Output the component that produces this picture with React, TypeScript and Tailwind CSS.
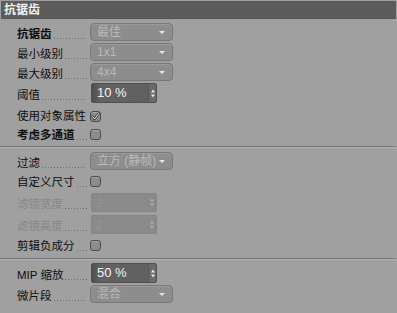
import React from "react";

const font = "font-['Liberation_Sans','Noto_Sans_CJK_SC',sans-serif]";

function Label({ text, bold, disabled, low }: { text: string; bold?: boolean; disabled?: boolean; low?: boolean }) {
  return (
    <div className={`flex items-end w-[89px] pl-[17px] pr-[2px] shrink-0 ${low ? "pt-[3px]" : ""}`}>
      <span
        className={`whitespace-nowrap text-[11.5px] leading-[16px] ${bold ? "font-bold" : ""} ${
          disabled ? "text-[#888888]" : "text-[#0f0f0f]"
        }`}
      >
        {text}
      </span>
      <span className="flex-1 h-px mb-[3px] ml-[2px] bg-[linear-gradient(to_right,#707070_1px,transparent_1px)] bg-[length:3px_1px]" />
    </div>
  );
}

function Dropdown({ value }: { value: string }) {
  return (
    <div className="relative w-[83px] h-[18px] ml-[1px] rounded-[4px] border border-[#787878] bg-[#8d8d8d] shadow-[inset_0_1px_0_#9a9a9a] flex items-center pl-[6px]">
      <span className="text-[12px] leading-[14px] text-[#bababa]">{value}</span>
      <svg className="absolute right-[7px] top-[7px]" width="6" height="3" viewBox="0 0 6 3">
        <path d="M0 0H6L3 3Z" fill="#e6e6e6" />
      </svg>
    </div>
  );
}

function Spinner({ color }: { color: string }) {
  return (
    <svg width="4" height="9" viewBox="0 0 4 9">
      <path d="M0 3.5L2 0.5L4 3.5Z" fill={color} />
      <path d="M0 5.5L2 8.5L4 5.5Z" fill={color} />
    </svg>
  );
}

function NumField({ value, disabled }: { value: string; disabled?: boolean }) {
  if (disabled) {
    return (
      <div className="w-[66px] h-[19px] ml-[2px] rounded-[2px] border border-[#858585] bg-[#8a8a8a] flex items-center">
        <span className="flex-1 pl-[4px] text-[12px] leading-[14px] text-[#959595]">{value}</span>
        <div className="w-[8px] h-full flex items-center justify-center">
          <Spinner color="#adadad" />
        </div>
      </div>
    );
  }
  return (
    <div className="w-[66px] h-[20px] ml-[2px] rounded-[2px] border border-[#505050] bg-[linear-gradient(to_right,#4e4e4e,#626262_12%,#606060)] flex items-center">
      <span className="flex-1 pl-[5px] text-[13px] leading-[14px] text-[#f4f4f4]">{value}</span>
      <div className="w-[8px] h-full bg-[#6a6a6a] border-l border-[#585858] flex items-center justify-center">
        <Spinner color="#e8e8e8" />
      </div>
    </div>
  );
}

function Checkbox({ checked }: { checked?: boolean }) {
  return (
    <div className="w-[11px] h-[11px] ml-[1px] rounded-[3px] border border-[#4c4c4c] bg-[#8c8c8c] shadow-[inset_0_1px_0_#a6a6a6] flex items-center justify-center">
      {checked && (
        <svg width="9" height="9" viewBox="0 0 9 9">
          <path d="M1.5 4.5L3.5 7L7.8 1.5" fill="none" stroke="#3a3a3a" strokeWidth="2.4" strokeLinecap="round" strokeLinejoin="round" />
          <path d="M1.5 4.5L3.5 7L7.8 1.5" fill="none" stroke="#f2f2f2" strokeWidth="1" strokeLinecap="round" strokeLinejoin="round" />
        </svg>
      )}
    </div>
  );
}

function Row({ h, children }: { h: string; children: React.ReactNode }) {
  return <div className={`flex items-center ${h}`}>{children}</div>;
}

function Separator() {
  return <div className="w-[395px] border-t border-[#727272] border-b border-b-[#b3b3b3]" />;
}

export default function App() {
  return (
    <div className={`w-[397px] h-[313px] bg-[#a0a0a0] overflow-hidden pt-[1px] ${font}`}>
      <div className="mx-[1px] h-[18px] bg-[#5c5c5c] border-b border-[#555555] flex items-center pl-[3px]">
        <span className="text-[12px] leading-[14px] font-bold text-[#f0f0f0]">抗锯齿</span>
      </div>
      <div className="pt-[3px]">
        <Row h="h-[20px]">
          <Label text="抗锯齿" bold low />
          <Dropdown value="最佳" />
        </Row>
        <Row h="h-[20px]">
          <Label text="最小级别" low />
          <Dropdown value="1x1" />
        </Row>
        <Row h="h-[20px]">
          <Label text="最大级别" low />
          <Dropdown value="4x4" />
        </Row>
        <Row h="h-[22px]">
          <Label text="阈值" low />
          <NumField value="10 %" />
        </Row>
        <div className="h-[2px]" />
        <Row h="h-[20px]">
          <Label text="使用对象属性" />
          <Checkbox checked />
        </Row>
        <Row h="h-[17px]">
          <Label text="考虑多通道" bold />
          <Checkbox />
        </Row>
        <div className="h-[3px]" />
        <Separator />
        <div className="h-[2px]" />
        <Row h="h-[22px]">
          <Label text="过滤" low />
          <Dropdown value="立方 (静帧)" />
        </Row>
        <Row h="h-[19px]">
          <Label text="自定义尺寸" />
          <Checkbox />
        </Row>
        <Row h="h-[23px]">
          <Label text="滤镜宽度" disabled low />
          <NumField value="2" disabled />
        </Row>
        <Row h="h-[21px]">
          <Label text="滤镜高度" disabled low />
          <NumField value="2" disabled />
        </Row>
        <Row h="h-[21px]">
          <Label text="剪辑负成分" />
          <Checkbox />
        </Row>
        <div className="h-[2px]" />
        <Separator />
        <div className="h-[1px]" />
        <Row h="h-[24px]">
          <Label text="MIP 缩放" low />
          <NumField value="50 %" />
        </Row>
        <Row h="h-[18px]">
          <Label text="微片段" low />
          <Dropdown value="混合" />
        </Row>
      </div>
    </div>
  );
}
